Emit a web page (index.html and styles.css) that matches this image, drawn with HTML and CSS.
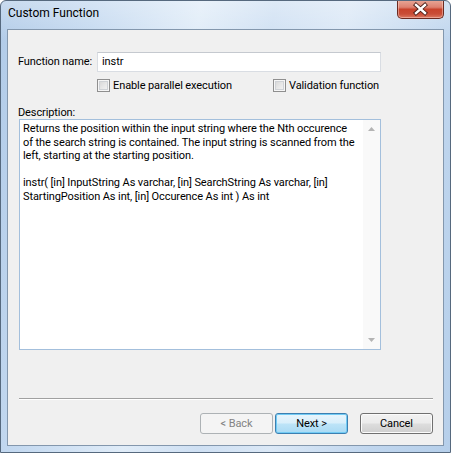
FILE: index.html
```html
<!DOCTYPE html>
<html>
<head>
<meta charset="utf-8">
<link rel="stylesheet" href="styles.css">
</head>
<body>
<div class="window">
  <div class="titlebar">
    <span class="title">Custom Function</span>
    <div class="close">
      <svg width="47" height="19" viewBox="0 0 47 19">
        <path d="M19 5 L28 13 M28 5 L19 13" stroke="#4a1c16" stroke-width="4.2" stroke-linecap="square" fill="none"/>
        <path d="M19 5 L28 13 M28 5 L19 13" stroke="#ffffff" stroke-width="2.4" stroke-linecap="square" fill="none"/>
      </svg>
    </div>
  </div>
  <div class="client">
    <div class="name-row">
      <span class="name-label">Function name:</span>
      <div class="input">instr</div>
    </div>
    <div class="check-row">
      <label class="check"><span class="box"></span><span class="check-text">Enable parallel execution</span></label>
      <label class="check"><span class="box"></span><span class="check-text">Validation function</span></label>
    </div>
    <div class="desc-label">Description:</div>
    <div class="textarea">
      <div class="text">
        <div class="line">Returns the position within the input string where the Nth occurence</div>
        <div class="line">of the search string is contained. The input string is scanned from the</div>
        <div class="line">left, starting at the starting position.</div>
        <div class="line blank"></div>
        <div class="line">instr( [in] InputString As varchar, [in] SearchString As varchar, [in]</div>
        <div class="line">StartingPosition As int, [in] Occurence As int ) As int</div>
      </div>
      <div class="scrollbar">
        <svg class="arrow" width="17" height="17" viewBox="0 0 17 17"><polygon points="5,11 12,11 8.5,7" fill="#b4b4b4"/></svg>
        <svg class="arrow" width="17" height="17" viewBox="0 0 17 17"><polygon points="5,6 12,6 8.5,10" fill="#b4b4b4"/></svg>
      </div>
    </div>
    <div class="separator"></div>
    <div class="buttons">
      <button class="btn disabled">&lt; Back</button>
      <button class="btn default">Next &gt;</button>
      <button class="btn cancel">Cancel</button>
    </div>
  </div>
</div>
</body>
</html>
```

FILE: styles.css
```css
html, body {
  margin: 0;
  padding: 0;
  background: #ffffff;
}

body {
  font-family: Roboto, "Noto Sans", "Liberation Sans", sans-serif;
  font-size: 11px;
  letter-spacing: -0.1px;
  color: #000;
}

.window {
  box-sizing: border-box;
  width: 451px;
  height: 453px;
  border: 1px solid #56697e;
  border-radius: 6px 6px 0 0;
  background:
    linear-gradient(to bottom, rgba(255,255,255,0.3), rgba(255,255,255,0) 40px),
    linear-gradient(100deg, #b1cbe8 0%, #c4d9f0 18%, #e0ecf8 38%, #cfe0f3 52%, #dbe8f6 66%, #c0d6ee 85%, #b6cfea 100%);
  display: flex;
  flex-direction: column;
  overflow: hidden;
}

.titlebar {
  height: 28px;
  flex: none;
  display: flex;
  align-items: flex-start;
  padding: 0 6px 0 7px;
}

.title {
  font-size: 12px;
  letter-spacing: 0;
  line-height: 15px;
  padding-top: 5px;
  color: #000;
}

.close {
  margin-left: auto;
  margin-top: -1px;
  box-sizing: border-box;
  width: 47px;
  height: 19px;
  border: 1px solid #6b2a21;
  border-top: none;
  border-radius: 0 0 5px 5px;
  background: linear-gradient(to bottom, #e9a898 0%, #dd8170 40%, #c8432c 52%, #c94d37 78%, #dc7a63 100%);
  box-shadow: inset 0 0 0 1px rgba(255,220,210,0.45);
  position: relative;
}

.close svg {
  position: absolute;
  left: -1px;
  top: 0;
}

.client {
  flex: 1;
  margin: 0 6px 6px 6px;
  border: 1px solid #8397ad;
  background: #f0f0f0;
  padding: 22px 10px 11px 10px;
  display: flex;
  flex-direction: column;
}

.name-row {
  display: flex;
  align-items: center;
  height: 20px;
}

.name-label {
  width: 79px;
  line-height: 20px;
}

.input {
  box-sizing: border-box;
  width: 284px;
  height: 20px;
  background: #fff;
  border: 1px solid #d9dde3;
  border-top-color: #c5c9cf;
  padding: 0 4px;
  line-height: 18px;
}

.check-row {
  margin-top: 7px;
  height: 13px;
  padding-left: 79px;
  display: grid;
  grid-template-columns: 176px auto;
}

.check {
  display: flex;
  align-items: center;
  height: 13px;
}

.box {
  box-sizing: border-box;
  width: 13px;
  height: 13px;
  border: 1px solid #8f8f8f;
  background: linear-gradient(135deg, #d2d2d2 0%, #e6e6e6 50%, #f7f7f7 100%);
  box-shadow: inset 0 0 0 1px #f6f6f6, inset 0 0 0 2px #cfd2d6;
  flex: none;
}

.check-text {
  margin-left: 3px;
  line-height: 11px;
  white-space: nowrap;
}

.desc-label {
  margin-top: 14px;
  line-height: 13px;
  height: 13px;
}

.textarea {
  box-sizing: border-box;
  margin-left: 1px;
  width: 362px;
  height: 231px;
  border: 1px solid #a3bfdc;
  background: #fff;
  display: flex;
}

.text {
  flex: 1;
  padding: 2px 0 0 3px;
  line-height: 13.5px;
}

.line {
  white-space: nowrap;
  height: 13.5px;
}

.scrollbar {
  width: 17px;
  background: #f9f9f9;
  display: flex;
  flex-direction: column;
  justify-content: space-between;
}

.arrow {
  display: block;
}

.separator {
  margin-top: 48px;
  margin-left: 1px;
  height: 0;
  border-top: 1px solid #a0a0a0;
  border-bottom: 1px solid #ffffff;
}

.buttons {
  margin-top: 13px;
  display: flex;
  justify-content: flex-end;
  gap: 2px;
}

.btn {
  box-sizing: border-box;
  width: 73px;
  height: 21px;
  margin: 0;
  padding: 0;
  font-family: inherit;
  font-size: 11px;
  letter-spacing: -0.1px;
  color: #000;
  border: 1px solid #707070;
  border-radius: 3px;
  background: linear-gradient(to bottom, #f2f2f2 0%, #ebebeb 48%, #dddddd 52%, #cfcfcf 100%);
  box-shadow: inset 0 0 0 1px #fbfbfb;
}

.btn.disabled {
  color: #838383;
  border-color: #adb2b5;
  background: #f4f4f4;
  box-shadow: none;
}

.btn.default {
  border-color: #3c7fb1;
  background: linear-gradient(to bottom, #e9f5fc 0%, #d8effb 48%, #bde4f8 52%, #a9daf4 100%);
  box-shadow: inset 0 0 0 1px #72cbf4;
}

.btn.cancel {
  margin-left: 10px;
}
```
